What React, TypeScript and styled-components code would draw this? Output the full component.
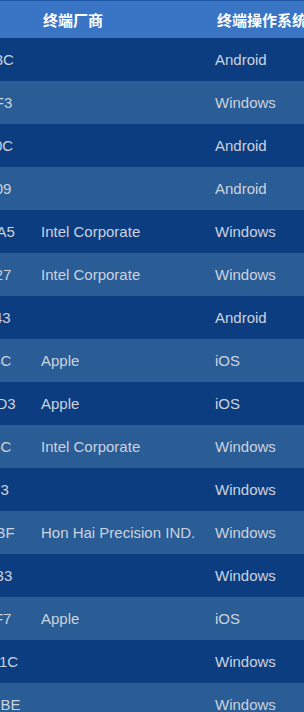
import { useLayoutEffect, useRef } from "react";
import styled, { createGlobalStyle } from "styled-components";

const GlobalStyle = createGlobalStyle`
    html, body {
        margin: 0;
        padding: 0;
        background-color: #0c3d80;
        overflow: hidden;
    }
`;

// the table is wider than the screen and is scrolled to the vendor / OS columns
const TableWrapper = styled.div`
    width: 304px;
    height: 712px;
    overflow: hidden;
    background-color: #0c3d80;
`;

const Table = styled.table`
    width: 487px;
    table-layout: fixed;
    border-collapse: collapse;
    font-family: "Liberation Sans", Arial, "Noto Sans CJK SC", sans-serif;
    font-size: 15px;
`;

const HeadCell = styled.th`
    height: 37px;
    padding: 0 0 0 15px;
    border-top: solid 1px #1f58a8;
    background-color: #3a75c5;
    color: #ffffff;
    font-weight: bold;
    text-align: left;
    white-space: nowrap;
    overflow: hidden;
    font-family: "Liberation Sans", "Noto Sans CJK SC", sans-serif;
`;

const Row = styled.tr<{ $odd: boolean }>`
    height: 43px;
    background-color: ${props => (props.$odd ? "#2a5c96" : "#0c3d80")};
`;

const Cell = styled.td`
    padding: 0 0 0 13px;
    color: #ccd3de;
    white-space: nowrap;
    overflow: hidden;
`;

type Terminal = {
    mac: string,
    vendor: string,
    os: string,
}

const terminals: Terminal[] = [
    { mac: "40:8D:51:62:97:3C", vendor: "", os: "Android" },
    { mac: "70:85:C2:14:36:F3", vendor: "", os: "Windows" },
    { mac: "58:00:E3:21:40:0C", vendor: "", os: "Android" },
    { mac: "D0:57:94:61:28:09", vendor: "", os: "Android" },
    { mac: "A4:C3:50:81:26:A5", vendor: "Intel Corporate", os: "Windows" },
    { mac: "10:D4:56:39:80:27", vendor: "Intel Corporate", os: "Windows" },
    { mac: "62:B0:31:58:90:43", vendor: "", os: "Android" },
    { mac: "70:56:81:29:34:4C", vendor: "Apple", os: "iOS" },
    { mac: "AC:87:12:36:95:D3", vendor: "Apple", os: "iOS" },
    { mac: "84:16:20:71:39:5C", vendor: "Intel Corporate", os: "Windows" },
    { mac: "00:50:56:12:08:73", vendor: "", os: "Windows" },
    { mac: "C8:F0:21:47:56:BF", vendor: "Hon Hai Precision IND.", os: "Windows" },
    { mac: "00:1C:42:F6:50:33", vendor: "", os: "Windows" },
    { mac: "A8:60:51:29:84:F7", vendor: "Apple", os: "iOS" },
    { mac: "DC:A6:32:78:50:1C", vendor: "", os: "Windows" },
    { mac: "0C:D5:C8:F1:42:BE", vendor: "", os: "Windows" },
];

const App = () => {
    const wrapperRef = useRef<HTMLDivElement>(null);

    useLayoutEffect(() => {
        if (wrapperRef.current) {
            wrapperRef.current.scrollLeft = 125;
        }
    }, []);

    return (
        <TableWrapper ref={wrapperRef}>
            <GlobalStyle />
            <Table>
                <colgroup>
                    <col style={{ width: "153px" }} />
                    <col style={{ width: "174px" }} />
                    <col />
                </colgroup>
                <thead>
                    <tr>
                        <HeadCell>终端MAC</HeadCell>
                        <HeadCell>终端厂商</HeadCell>
                        <HeadCell>终端操作系统</HeadCell>
                    </tr>
                </thead>
                <tbody>
                    {terminals.map((terminal, index) => {
                        return (
                            <Row key={terminal.mac} $odd={index % 2 === 1}>
                                <Cell>{terminal.mac}</Cell>
                                <Cell>{terminal.vendor}</Cell>
                                <Cell>{terminal.os}</Cell>
                            </Row>
                        )
                    })}
                </tbody>
            </Table>
        </TableWrapper>
    );
};

export default App;
